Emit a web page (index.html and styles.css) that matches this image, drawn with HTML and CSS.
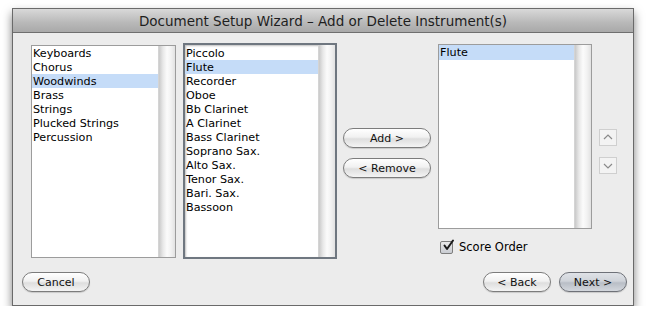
FILE: index.html
```html
<!DOCTYPE html>
<html lang="en">
<head>
  <meta charset="UTF-8" />
  <title>Document Setup Wizard</title>
  <link rel="stylesheet" href="styles.css">
</head>
<body>
  <div class="window">
    <div class="titlebar">Document Setup Wizard – Add or Delete Instrument(s)</div>

    <div class="content">
      <div class="main-row">
        <div class="listbox families">
          <ul class="items">
            <li>Keyboards</li>
            <li>Chorus</li>
            <li class="selected">Woodwinds</li>
            <li>Brass</li>
            <li>Strings</li>
            <li>Plucked Strings</li>
            <li>Percussion</li>
          </ul>
          <div class="scrolltrack"></div>
        </div>

        <div class="listbox instruments focused">
          <ul class="items">
            <li>Piccolo</li>
            <li class="selected">Flute</li>
            <li>Recorder</li>
            <li>Oboe</li>
            <li>Bb Clarinet</li>
            <li>A Clarinet</li>
            <li>Bass Clarinet</li>
            <li>Soprano Sax.</li>
            <li>Alto Sax.</li>
            <li>Tenor Sax.</li>
            <li>Bari. Sax.</li>
            <li>Bassoon</li>
          </ul>
          <div class="scrolltrack"></div>
        </div>

        <div class="move-buttons">
          <button class="pill">Add &gt;</button>
          <button class="pill">&lt; Remove</button>
        </div>

        <div class="chosen-col">
          <div class="listbox chosen">
            <ul class="items">
              <li class="selected">Flute</li>
            </ul>
            <div class="scrolltrack"></div>
          </div>
          <label class="check-row">
            <span class="checkbox">
              <svg width="13" height="13" viewBox="0 0 13 13">
                <path d="M2.5 6.5 L5 10 L11 1.5" fill="none" stroke="#1a1a1a" stroke-width="2" stroke-linecap="round" stroke-linejoin="round"/>
              </svg>
            </span>
            Score Order
          </label>
        </div>

        <div class="order-arrows">
          <span class="arrow-btn">
            <svg width="18" height="17" viewBox="0 0 18 17">
              <path d="M5 10 L9 6 L13 10" fill="none" stroke="#8a8a8a" stroke-width="1.2"/>
            </svg>
          </span>
          <span class="arrow-btn">
            <svg width="18" height="17" viewBox="0 0 18 17">
              <path d="M5 7 L9 11 L13 7" fill="none" stroke="#8a8a8a" stroke-width="1.2"/>
            </svg>
          </span>
        </div>
      </div>

      <div class="footer">
        <button class="pill wide">Cancel</button>
        <div class="nav">
          <button class="pill wide">&lt; Back</button>
          <button class="pill wide default">Next &gt;</button>
        </div>
      </div>
    </div>
  </div>
</body>
</html>
```

FILE: styles.css
```css
body {
  margin: 0;
  background: #ffffff;
  font-family: "DejaVu Sans", sans-serif;
  font-size: 11px;
  color: #000;
}

.window {
  width: 622px;
  height: 298px;
  margin: 8px 0 0 12px;
  box-sizing: border-box;
  border: 1px solid #6a6a6a;
  background: #ececec;
  box-shadow: 0 5px 9px rgba(0, 0, 0, 0.5);
  display: flex;
  flex-direction: column;
}

.titlebar {
  height: 23px;
  line-height: 24px;
  text-align: center;
  font-size: 13.5px;
  color: #1e1e1e;
  background: linear-gradient(#d9d9d9, #b8b8b8 60%, #a9a9a9);
  border-bottom: 1px solid #6f6f6f;
}

.content {
  flex: 1;
  display: flex;
  flex-direction: column;
}

.main-row {
  display: flex;
  align-items: flex-start;
  padding: 10px 0 0 18px;
}

.listbox {
  display: flex;
  background: #fff;
  box-sizing: border-box;
  border: 1px solid #9c9c9c;
}

.listbox .items {
  list-style: none;
  margin: 0;
  padding: 0;
  flex: 1;
}

.listbox .items li {
  height: 14px;
  line-height: 16px;
  padding-left: 1px;
  white-space: nowrap;
  font-size: 11.2px;
}

.listbox .items li.selected {
  background: #c5dcf8;
}

.scrolltrack {
  width: 16px;
  background: linear-gradient(to right, #c9c9c9, #e8e8e8 25%, #fbfbfb 50%, #f2f2f2 75%, #e2e2e2);
  border-left: 1px solid #d4d4d4;
}

.families {
  width: 145px;
  height: 213px;
  margin-top: 2px;
}

.instruments {
  width: 154px;
  height: 216px;
  margin-left: 7px;
}

.focused {
  border: 2px solid #6f7780;
  box-shadow: inset 1px 1px 2px rgba(0, 0, 0, 0.25);
}

.focused .items {
  padding-top: 1px;
}

.move-buttons {
  display: flex;
  flex-direction: column;
  gap: 10px;
  margin: 85px 0 0 6px;
  width: 88px;
}

.pill {
  height: 20px;
  border-radius: 10px;
  border: 1px solid #7c7c7c;
  background: linear-gradient(#ffffff, #f1f1f1 45%, #dedede 55%, #f4f4f4);
  font-family: "DejaVu Sans", sans-serif;
  font-size: 11px;
  color: #111;
  padding: 0;
  box-shadow: 0 1px 1px rgba(0, 0, 0, 0.15);
}

.chosen-col {
  margin: 1px 0 0 7px;
  display: flex;
  flex-direction: column;
}

.chosen {
  width: 154px;
  height: 185px;
}

.chosen .items li {
  height: 15px;
  line-height: 16px;
}

.check-row {
  display: flex;
  align-items: center;
  gap: 6px;
  margin: 11px 0 0 2px;
  font-size: 11.5px;
}

.checkbox {
  width: 13px;
  height: 13px;
  box-sizing: border-box;
  border: 1px solid #7d7d7d;
  border-radius: 2px;
  background: linear-gradient(#e9e9e9, #c9ccd2);
  display: flex;
  position: relative;
}

.checkbox svg {
  position: absolute;
  left: 1px;
  top: -3px;
}

.order-arrows {
  display: flex;
  flex-direction: column;
  gap: 11px;
  margin: 86px 0 0 7px;
}

.arrow-btn {
  display: block;
  width: 18px;
  height: 17px;
  box-sizing: border-box;
  border: 1px solid #cfcfcf;
  background: #f3f3f3;
}

.arrow-btn svg {
  display: block;
  margin: -1px;
}

.footer {
  display: flex;
  justify-content: space-between;
  padding: 13px 6px 0 9px;
}

.nav {
  display: flex;
  gap: 8px;
}

.wide {
  width: 68px;
}

.default {
  background: linear-gradient(#dfe2e7, #cfd3d9 45%, #b9bec6 55%, #d3d7dd);
  border-color: #6e7178;
}
```
